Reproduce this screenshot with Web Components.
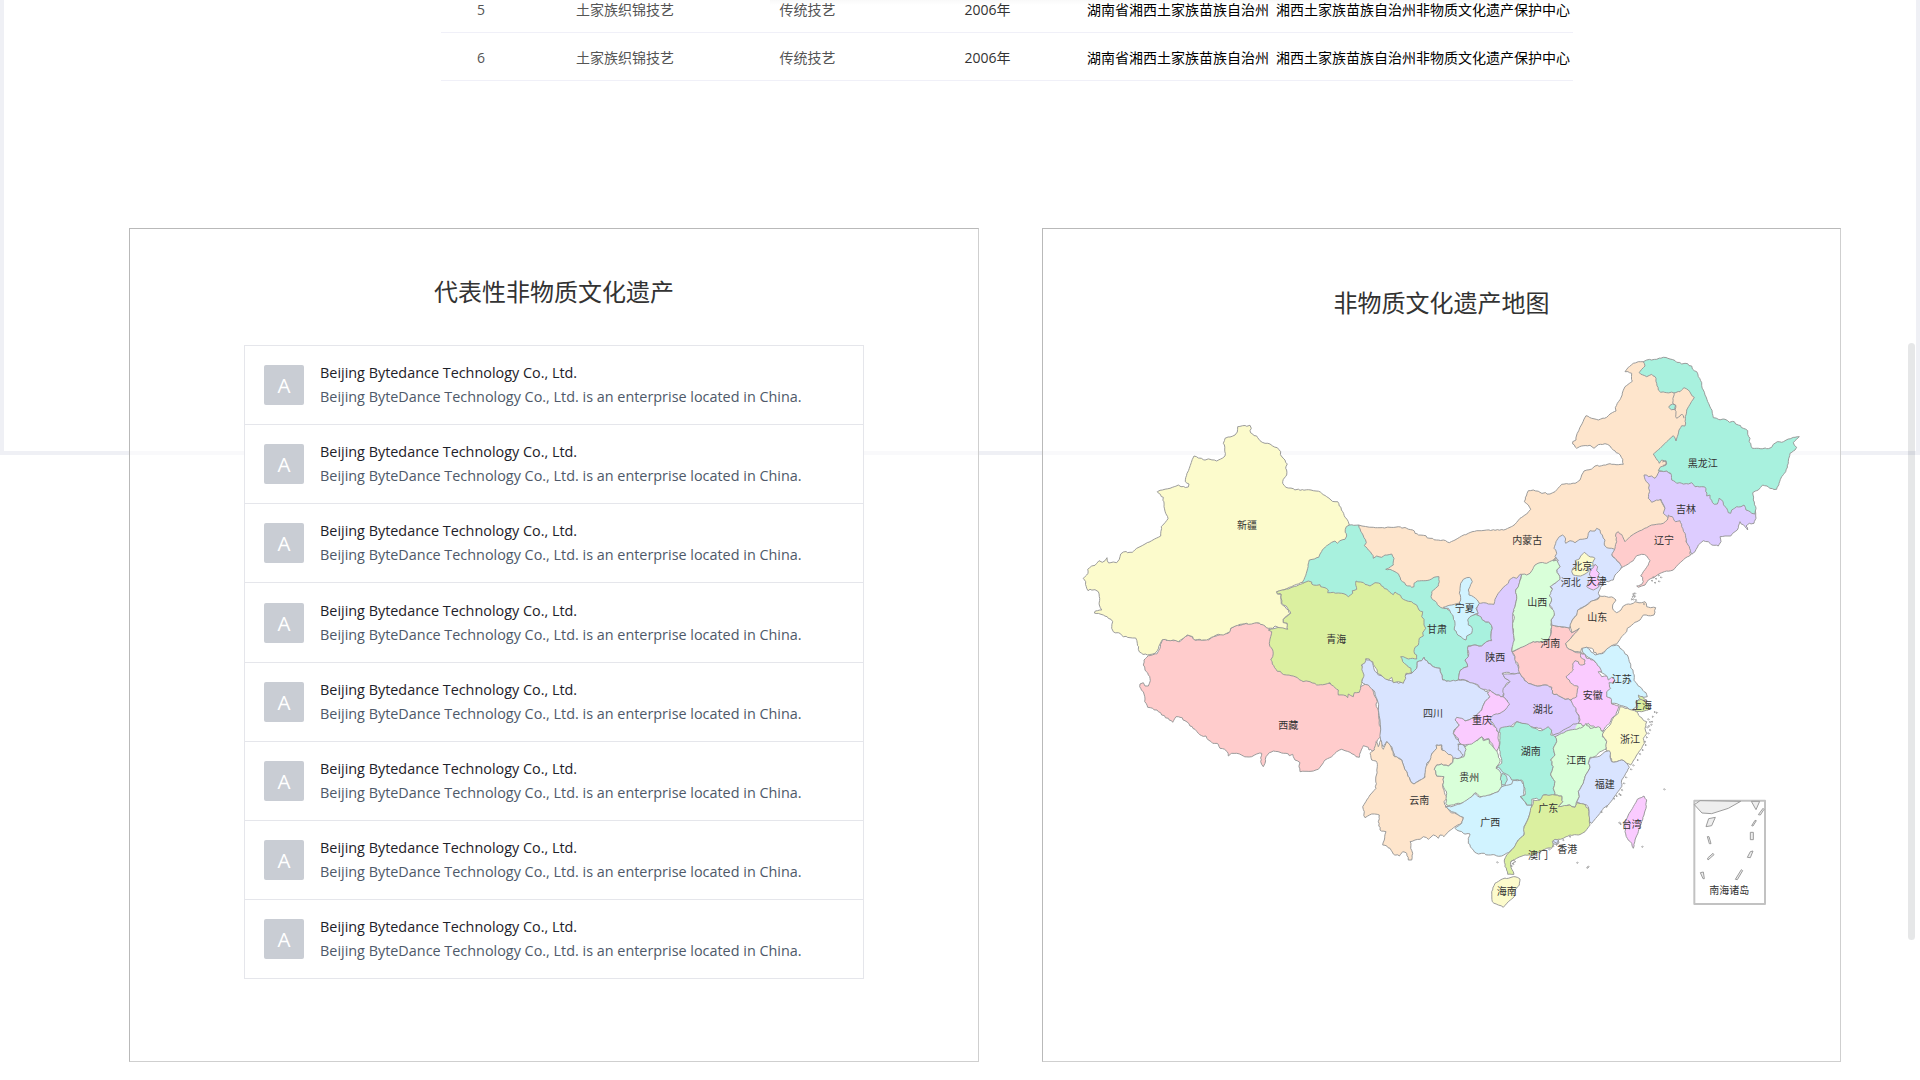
<!DOCTYPE html>
<html lang="zh-CN">
<head>
<meta charset="utf-8">
<title>非物质文化遗产</title>
<style>
html,body{margin:0;height:100%;overflow:hidden;background:#fff;font-family:"Open Sans","Noto Sans CJK SC",sans-serif}
</style>
</head>
<body>
<heritage-page></heritage-page>
<script>
const define = (name, html, setup) => customElements.define(name, class extends HTMLElement {
  constructor() {
    super();
    const t = document.createElement('template');
    t.innerHTML = html;
    this.attachShadow({ mode: 'open' }).append(t.content.cloneNode(true));
  }
  connectedCallback() { if (setup) setup(this, this.shadowRoot); }
});

define('heritage-row', `<style>
:host{display:grid;grid-template-columns:80px 208px 157px 201px 189px 297px;height:48px;box-sizing:border-box;border-bottom:1px solid #f0f0f8;align-items:center;text-align:center;font-size:14px;line-height:18px;color:#555;white-space:nowrap;padding-top:3px}
slot{display:block}
.y{color:#333;padding-left:2px}.b{color:#000;text-align:left}
</style>
<slot name="no"></slot><slot name="name"></slot><slot name="kind"></slot><slot name="year" class="y"></slot><slot name="area" class="b"></slot><slot name="unit" class="b"></slot>`);

define('heritage-card', `<style>
:host{display:flex;flex-direction:column;align-items:center;box-sizing:border-box;height:834px;border:1px solid;border-color:#b9b9b9 #cfcfcf #cfcfcf #b9b9b9;background:rgba(255,255,255,.6)}
h2{margin:0;font-size:24px;line-height:36px;font-weight:400;color:#333}
</style><h2><slot name="title"></slot></h2><slot></slot>`);

define('company-item', `<style>
:host{display:flex;align-items:center;gap:16px;height:79px;flex:none;box-sizing:border-box;padding:0 19px;border-bottom:1px solid #e5e6eb;background:#fff}
:host(:nth-child(4)){height:80px}
:host(:last-child){border-bottom:0;height:78px}
.avatar{width:40px;height:40px;border-radius:2px;background:#c9cdd4;color:#fff;font-size:20.5px;display:flex;align-items:center;justify-content:center}
.text{display:flex;flex-direction:column;font-size:14.4px;line-height:24px;white-space:nowrap}
.title{color:#1d2129}.desc{color:#4e5969}
</style><div class="avatar">A</div><div class="text"><slot name="title" class="title"></slot><slot name="desc" class="desc"></slot></div>`);

define('company-list', `<style>
:host{display:flex;flex-direction:column;width:620px;height:634px;box-sizing:border-box;border:1px solid #e5e6eb;margin-top:35px}
</style><slot></slot>`, el => {
  if (el.children.length) return;
  for (let i = 0; i < 8; i++) el.insertAdjacentHTML('beforeend', `<company-item><span slot="title">Beijing Bytedance Technology Co., Ltd.</span><span slot="desc">Beijing ByteDance Technology Co., Ltd. is an enterprise located in China.</span></company-item>`);
});

/* Outlines use third-pixel units; the leading letter picks the map sheet whose origin they are relative to. */
const SHEETS = { D:[1070,410], E:[1380,340], F:[1340,500], G:[1340,680], H:[1120,560], I:[1640,760] };
const C = { yellow:'#fcfbcc', teal:'#a8f1de', orange:'#fee5cc', red:'#ffcccc', purple:'#ddccff', blue:'#d9e4ff', green:'#d9ffd9', cyan:'#d1f3ff', lime:'#dbf0a0', pink:'#facbff' };
/* Plain patches below the regions, so that no junction of three borders shows a hole. */
const BASE = [
['blue','G 345,158 390,190 395,240 345,240'],
['cyan','G 472,262 540,262 540,330 472,330'],
['green','G 650,168 690,130 745,122 775,150 700,180'],
['purple','G 640,160 680,135 715,128 700,155 650,175']
];
const REGIONS = [
['orange','E -64,555 -20,562 0,563 30,562 55,560 80,565 98,570 105,580 130,586 150,595 170,600 190,600 208,608 225,600 245,588 265,580 290,572 320,570 345,571 370,570 390,562 405,553 420,535 440,522 452,508 445,495 433,485 440,465 445,452 460,450 480,457 510,462 525,455 545,433 565,432 585,430 600,420 605,405 612,393 635,387 645,378 665,377 690,371 715,374 730,373 728,358 715,340 700,330 690,318 675,311 655,314 642,325 630,316 605,318 590,325 578,312 578,305 588,300 590,285 600,262 618,227 635,235 655,240 680,232 690,222 708,213 706,203 712,190 722,175 735,140 757,124 755,100 735,95 745,82 760,70 775,65 790,65 810,75 900,120 960,170 940,220 930,260 910,330 860,410 830,450 870,540 850,570 740,630 700,645 600,620 540,640 500,700 F 560,260 480,340 420,340 320,340 300,345 200,290 90,200 50,120'],
['teal','D 838,345 866,345 875,368 889,398 883,407 895,420 905,432 910,445 F 110,168 125,172 135,165 155,162 162,175 160,195 145,205 137,208 150,208 165,215 178,228 182,240 197,255 215,262 222,260 222,250 232,243 250,242 268,240 282,232 297,230 298,245 295,258 275,275 273,290 280,300 297,318 310,325 325,330 400,345 412,345 425,350 432,362 450,370 457,385 453,405 455,420 440,425 425,438 405,435 385,437 383,460 385,470 375,480 383,500 372,503 360,512 357,525 355,540 343,545 325,543 308,540 303,520 300,505 280,500 265,490 252,472 245,482 232,485 230,505 220,523 215,520 200,505 182,485 180,470 170,400 100,300 D 790,560 750,560 697,517 690,500 700,430 800,380 820,345'],
['red','H 85,287 110,282 120,265 127,238 145,241 160,242 180,245 195,230 205,226 215,230 222,238 240,240 265,240 280,230 300,224 325,220 332,205 345,198 370,193 395,190 410,188 430,193 445,203 470,215 480,320 560,350 660,380 690,395 722,380 735,373 750,377 758,390 765,410 772,425 768,432 775,450 778,480 782,510 782,530 772,540 770,560 765,575 752,568 747,570 745,562 730,557 722,575 718,592 708,590 690,577 675,572 665,568 650,575 635,590 615,600 605,615 595,628 580,633 555,634 540,635 537,620 540,608 525,600 520,590 518,583 508,587 498,580 480,577 460,573 448,578 438,590 435,610 430,620 422,605 425,580 410,582 395,590 370,588 350,580 335,580 325,588 318,572 300,565 295,553 278,550 265,540 258,528 245,527 235,520 225,508 210,498 195,482 180,472 168,470 158,487 145,475 125,465 115,455 98,445 83,442 74,425 73,405 70,395 62,385 60,372 70,368 75,378 85,378 91,362 85,345 75,330 70,315 72,300'],
['yellow','D 503,50 518,47 530,49 540,46 544,55 540,62 548,72 563,83 570,92 585,100 600,102 608,108 622,113 632,125 634,138 645,150 652,162 647,175 650,195 640,208 638,220 648,232 670,236 690,241 715,239 738,243 755,250 770,260 783,270 795,275 803,275 808,288 818,305 825,322 835,335 838,345 829,350 826,358 830,378 825,388 810,392 802,400 795,393 785,397 770,407 757,420 750,432 746,442 733,447 718,450 714,465 709,490 704,503 697,517 680,523 650,536 620,545 623,552 634,553 634,582 645,590 655,600 661,612 650,617 640,628 640,637 650,640 654,657 640,657 625,652 615,648 608,655 595,655 585,648 572,643 560,638 545,642 530,640 510,643 490,651 482,655 480,665 470,670 460,675 445,673 430,680 410,690 390,688 375,690 368,680 352,675 340,685 325,695 310,690 292,691 277,689 270,702 262,722 255,730 232,735 215,730 205,718 202,700 197,684 180,683 160,680 145,668 130,665 125,655 128,635 115,625 100,615 90,612 73,609 76,603 95,600 88,585 88,560 85,545 75,539 60,538 54,542 50,535 47,515 40,505 50,495 54,490 53,478 65,468 75,466 87,452 97,457 105,452 111,443 116,459 130,456 140,458 148,448 152,432 160,426 187,427 200,415 210,410 225,402 245,392 260,384 272,378 274,350 285,338 294,326 287,310 282,290 280,262 262,245 270,241 300,235 325,225 333,230 355,231 357,222 346,215 347,203 358,175 372,138 385,144 400,149 420,148 433,150 440,153 458,144 465,138 464,120 460,100 465,85 480,81 495,75 502,66'],
['blue','F 68,487 75,478 90,480 98,490 103,510 115,525 130,530 145,540 175,550 190,545 195,525 215,520 230,505 232,485 245,482 252,472 265,490 280,500 300,505 303,520 308,540 325,543 355,540 375,540 400,550 430,568 443,575 450,590 435,605 425,630 415,640 400,655 375,663 355,655 345,660 358,675 342,690 340,700 G 345,170 355,180 370,190 355,195 355,210 370,225 358,235 340,235 325,225 310,215 305,195 290,195 290,205 275,222 275,235 260,250 258,275 250,300 240,300 222,312 210,300 200,275 185,240 165,230 155,200 140,185 130,200 122,180 120,120 112,60 100,30 85,15 65,5 F 68,530 62,515'],
['lime','H 470,95 500,87 530,78 555,67 565,63 575,66 575,72 590,76 600,74 602,80 615,83 625,90 623,98 640,97 655,99 665,100 678,104 685,110 698,100 697,92 710,88 708,63 722,66 735,73 750,78 765,68 775,69 790,80 805,92 820,104 825,96 835,103 850,118 865,124 880,130 890,135 897,150 908,155 905,170 912,178 912,195 917,205 908,218 910,228 898,235 895,255 885,262 882,275 890,285 890,297 878,295 865,297 850,290 842,290 848,305 860,315 873,325 875,338 858,340 857,355 850,370 835,365 820,368 815,352 805,360 790,352 775,342 768,325 758,305 748,297 737,296 735,308 724,315 728,335 732,345 725,365 722,385 718,397 703,398 700,410 685,402 683,413 670,405 655,405 655,390 645,383 630,368 615,373 590,375 570,365 545,362 525,350 500,345 485,340 468,328 457,312 452,300 458,290 458,270 448,250 452,230 455,215 445,210 465,205 480,203 503,208 502,190 490,188 490,178 512,160 503,145 485,130 484,103 472,102'],
['orange','G 95,215 103,210 108,185 115,200 122,180 130,208 140,185 150,195 160,225 175,235 185,240 200,275 210,300 222,312 245,298 255,292 258,260 270,240 275,222 290,205 288,195 305,195 305,210 320,218 338,230 338,245 325,258 305,252 290,255 283,268 290,288 312,290 308,315 312,330 320,355 312,365 320,380 330,395 355,405 370,412 365,430 345,440 335,448 325,455 312,470 300,465 295,475 280,465 265,478 250,470 240,478 225,480 210,485 212,505 218,520 215,540 205,540 200,520 188,515 178,528 160,522 150,505 128,495 133,480 138,455 120,450 115,425 118,405 95,402 75,413 68,380 80,360 90,345 108,325 107,300 112,260 108,243 95,240 90,220'],
['purple','F 545,223 540,240 535,260 527,270 530,290 525,320 518,345 520,400 523,420 515,450 525,470 527,490 540,510 540,520 520,520 500,517 487,520 495,535 510,545 500,550 492,565 490,590 470,585 450,570 430,568 410,553 390,548 375,540 355,538 357,525 360,512 372,503 383,500 375,480 385,470 383,440 405,435 425,438 440,425 455,422 453,405 457,385 450,370 432,362 412,345 410,325 415,310 430,308 445,312 462,313 465,298 475,280 490,262 505,250 508,240 520,232 530,235 540,223'],
['cyan','F 380,233 392,235 397,245 390,260 385,270 387,285 400,290 412,300 418,310 408,325 415,340 400,345 390,350 383,360 385,375 397,385 395,400 380,408 378,420 365,412 350,400 343,390 345,370 338,345 325,325 310,322 335,315 357,310 362,300 358,280 362,250 370,238'],
['purple','E 792,405 800,405 805,410 815,408 825,415 832,405 838,393 860,393 900,410 1000,450 1060,480 1120,500 1127,520 1128,535 1122,550 1108,550 1098,558 1103,570 1095,560 1080,545 1072,570 1058,580 1052,588 1035,588 1020,590 1023,605 1015,618 995,615 985,605 970,602 955,615 945,635 935,643 925,630 915,590 890,550 862,530 850,520 855,505 848,490 843,478 830,480 815,487 805,475 808,450 805,430 795,418'],
['teal','E 790,65 800,60 830,58 850,52 870,57 890,67 905,72 915,70 935,78 943,92 950,95 955,110 965,128 970,150 975,165 983,185 992,205 997,220 1000,233 1015,238 1035,238 1048,247 1063,245 1075,255 1090,265 1103,272 1103,283 1110,295 1107,305 1117,325 1135,325 1160,326 1175,322 1180,313 1192,305 1205,307 1225,297 1245,292 1258,290 1245,302 1240,308 1250,322 1245,330 1230,340 1225,370 1217,395 1205,410 1197,430 1190,448 1170,445 1148,435 1135,450 1118,458 1120,480 1127,500 1125,522 1110,515 1098,510 1092,495 1083,500 1070,500 1055,510 1052,520 1045,518 1035,500 1025,480 1017,475 1012,492 1003,493 990,475 990,465 980,468 978,445 965,440 945,440 935,428 925,432 905,430 890,430 875,420 872,400 860,393 845,393 835,392 842,380 858,375 858,365 845,360 838,370 828,355 820,342 840,325 860,305 880,287 888,303 892,290 897,270 905,257 915,258 916,230 920,210 930,193 943,172 925,150 912,143 900,155 880,158 860,158 842,157 835,150 830,130 828,115 815,103 800,110 778,98 785,88 795,78'],
['teal','E 870,196 878,192 887,196 885,208 874,209 866,202'],
['red','E 695,640 705,625 710,605 708,580 715,575 728,590 735,605 750,590 765,580 780,572 800,563 815,555 830,553 850,550 862,540 865,525 880,535 887,545 900,542 905,560 915,580 918,605 928,620 932,645 915,655 895,673 880,690 860,693 845,698 825,710 805,720 795,735 785,738 775,742 770,738 785,733 790,725 788,712 782,708 790,695 805,675 810,662 800,648 785,643 770,647 760,662 745,672 730,680 722,685 718,668 705,655 695,645'],
['blue','F 647,150 642,145 648,125 658,110 668,105 675,112 677,130 690,122 705,128 720,118 742,115 745,100 750,92 765,93 770,85 780,90 787,105 795,120 793,135 800,143 815,145 824,148 815,165 825,175 838,188 845,200 840,210 825,225 820,240 805,245 795,242 782,262 775,280 780,290 765,300 750,305 740,315 720,325 710,345 700,355 692,375 688,385 665,380 650,378 635,375 633,360 643,345 637,325 628,315 635,300 628,285 637,265 630,258 645,250 660,235 655,222 650,210 660,200 650,190 655,180 645,170 650,160'],
['green','F 640,183 650,180 655,190 660,200 650,210 655,222 660,238 645,250 630,260 637,268 628,288 635,300 628,315 637,328 643,345 633,360 635,380 632,405 625,420 605,425 580,425 565,435 545,443 515,455 517,440 523,420 520,400 518,375 523,350 518,340 525,320 530,290 527,270 535,260 543,235 545,223 560,225 570,220 585,195 600,188 620,190 640,180 648,172'],
['red','F 635,375 650,380 665,382 688,385 695,398 705,393 718,385 710,398 700,405 690,418 677,430 680,440 695,450 710,458 725,458 735,463 745,500 720,560 712,590 705,597 690,600 670,595 655,587 637,580 635,562 615,555 600,558 580,555 560,545 545,530 537,515 535,495 527,485 525,470 517,457 535,447 560,435 580,425 605,425 625,422 632,405'],
['orange','F 692,385 690,375 697,360 710,345 713,330 725,325 745,312 755,303 775,297 780,288 800,290 820,293 828,300 818,315 820,330 830,338 843,330 850,318 865,312 880,310 885,305 905,308 915,305 920,320 947,323 942,345 925,347 910,345 900,360 885,367 870,380 862,385 860,395 845,410 830,432 815,437 800,450 785,460 770,465 755,445 740,442 725,445 722,457 705,455 695,450 680,440 677,430 690,418 700,405 710,395 718,385 705,393 695,398'],
['cyan','F 727,445 740,442 750,450 765,465 790,460 800,447 815,437 830,435 840,445 862,465 868,485 880,520 885,545 905,565 918,578 922,590 905,590 895,600 887,605 890,620 875,630 855,620 838,615 815,610 812,595 798,590 798,575 805,560 800,528 770,510 765,485 745,472 730,458'],
['purple','F 510,522 540,520 545,530 560,545 580,555 600,558 615,555 635,562 637,580 655,587 670,595 690,600 705,620 715,645 718,670 700,672 690,680 670,690 655,700 640,705 630,690 615,690 595,685 570,680 545,670 530,665 510,680 490,685 475,700 465,680 455,665 440,650 455,640 480,640 505,615 500,600 490,590 490,565 510,545 495,535 487,520'],
['pink','F 722,460 735,462 740,475 760,480 770,490 778,500 785,515 775,515 785,530 800,528 805,540 815,532 825,540 820,550 807,548 812,565 800,575 800,590 812,595 815,612 838,618 833,630 828,645 815,655 810,668 797,680 790,693 775,688 765,682 752,678 745,670 735,678 715,670 720,660 712,640 708,625 697,610 692,600 710,590 712,570 713,558 697,552 688,540 678,530 690,520 700,510 698,492 705,482 715,485 722,495 735,492 735,480 722,472'],
['green','G 353,193 370,193 378,208 372,230 358,235 340,235 338,248 325,258 305,252 290,255 283,268 290,288 312,290 308,315 320,340 318,355 320,375 335,375 355,370 375,368 395,350 405,338 420,350 440,350 455,342 475,335 485,320 483,290 480,275 468,265 480,245 475,225 470,210 458,200 448,190 445,178 430,182 425,170 412,182 400,180 390,190 375,200 365,190'],
['pink','F 450,570 470,585 490,590 500,600 509,612 495,630 480,640 460,645 450,655 455,670 470,685 475,705 478,735 470,753 460,740 450,725 447,716 432,720 425,710 412,720 395,732 375,735 360,730 355,715 340,700 345,690 358,675 345,660 350,652 365,655 375,663 400,655 415,640 425,630 435,605 450,590 443,580'],
['cyan','G 315,380 340,378 365,370 395,350 405,340 420,352 450,345 475,335 485,320 515,312 520,300 545,303 552,320 552,345 545,355 560,375 575,375 570,400 560,425 552,440 552,465 535,480 525,500 505,518 485,528 465,525 445,525 425,520 410,520 395,505 385,490 385,475 390,462 370,460 345,445 365,430 370,412 355,405 335,395'],
['teal','G 480,145 500,140 520,140 530,125 545,130 565,133 585,145 605,152 625,140 635,150 632,165 645,170 650,185 640,205 645,225 632,240 640,260 632,285 645,305 640,325 645,345 630,348 610,345 605,360 590,355 575,358 575,375 560,375 550,360 540,350 555,345 552,320 545,300 525,300 515,300 510,290 500,283 490,278 480,265 468,262 485,250 482,230 478,200 480,175'],
['teal','G 487,280 497,285 502,300 495,315 484,310 482,292'],
['green','G 645,170 665,160 690,150 710,148 730,140 738,130 750,145 775,140 790,155 787,170 800,185 798,208 780,215 765,230 750,232 745,250 750,262 735,290 730,310 715,335 718,350 708,370 705,382 690,375 670,380 655,380 668,365 665,348 645,345 640,325 645,305 632,285 640,260 632,240 645,225 640,205 650,185'],
['yellow','G 840,80 855,85 875,90 890,95 900,110 920,125 915,145 920,160 910,175 913,190 905,205 890,225 885,235 872,255 860,250 845,240 830,245 815,245 808,220 798,210 800,185 787,165 795,150 810,135 822,110 835,100'],
['blue','G 808,212 815,245 830,245 845,240 860,250 868,262 855,285 845,300 845,320 830,340 820,355 805,375 790,385 780,400 755,430 748,420 745,380 730,372 710,368 718,350 715,335 730,310 735,290 750,262 745,250 750,235 780,228 795,215'],
['lime','G 580,360 600,360 610,345 645,345 665,348 668,365 655,380 690,375 705,382 712,368 730,372 745,385 748,425 750,435 735,455 715,465 690,465 670,475 655,478 640,490 635,505 620,505 600,515 580,525 555,525 530,535 512,545 512,560 520,575 522,583 503,583 495,560 493,540 500,525 520,505 535,480 552,465 553,440 565,415 572,385 580,370'],
['yellow','G 487,597 505,595 525,590 540,597 538,615 525,630 523,650 505,665 490,682 475,675 457,665 455,635 465,610'],
['pink','G 912,348 920,360 918,385 912,405 905,425 895,455 885,480 880,505 875,490 862,475 855,455 855,430 865,405 880,380 892,358'],
['lime','F 890,603 903,598 918,605 930,615 925,630 905,635 885,632 893,620'],
['lime','F 895,585 908,590 920,600 908,600 897,594'],
['yellow','F 733,157 745,167 765,175 758,188 760,198 745,200 745,215 735,222 722,228 700,225 695,215 698,205 710,195 705,182 718,177 722,168'],
['pink','F 765,193 773,200 770,212 778,220 772,235 782,245 775,262 760,270 740,260 745,245 755,235 748,225 750,208 758,205'],
['blue','G 637,484 645,478 655,480 657,489 648,493 640,492']
];
const LINES = ['E 882,158 878,190 887,196 885,210 890,235 900,228 905,222 912,235','E 847,366 858,362 860,372 848,376','G 512,545 520,540 527,545 515,552','G 640,484 650,490 655,482'];
const ISLETS = 'E 820,712 828,716 837,724 825,728 843,712 816,722 836,706 765,760 758,770 755,778 762,766 F 880,282 884,290 880,298 888,300 912,312 G 925,118 930,126 934,134 927,138 936,125 944,96 950,98 938,110 922,142 930,150 925,160 920,172 915,185 917,195 908,210 900,222 893,240 880,256 873,268 858,292 852,310 846,330 838,342 830,348 842,345 822,356 800,380 785,396 973,328 838,428 842,432 907,500 712,548 742,563 745,560 472,547 600,518 612,510 628,508 640,498 650,494 670,480 690,470 520,552 515,558'.split(' ');
const LABELS = '新疆D531,347 青海D799,688 西藏H505,495 云南G238,362 甘肃F291,388 宁夏F374,324 内蒙古F562,122 陕西F466,473 山西F592,306 河北F692,248 北京F727,198 天津F770,245 山东F772,353 河南F631,431 安徽F758,585 江苏F845,537 上海F906,615 浙江G870,179 湖北F608,627 四川F279,641 重庆F426,662 湖南G572,215 江西G709,240 贵州G388,291 福建G794,314 广东G625,386 广西G451,428 台湾G875,432 香港G682,507 澳门G594,527 海南G500,635 黑龙江E968,371 吉林E918,507 辽宁E852,602 南海诸岛I268,392';

const MX = 1043, MY = 340;
const at = (s, x, y) => [SHEETS[s][0] - MX + x / 3, SHEETS[s][1] - MY + y / 3];
function points(src) {
  let s = 'D'; const out = [];
  for (const t of src.split(' ')) {
    if (SHEETS[t]) s = t; else { const [x, y] = t.split(',').map(Number); out.push(at(s, x, y)); }
  }
  return out;
}
/* Breaks long segments with a small offset that depends only on the segment's midpoint, so neighbours share it. */
function rough(p, closed) {
  const out = [];
  p.forEach((a, i) => {
    out.push(a);
    const b = p[(i + 1) % p.length];
    if (!closed && i === p.length - 1) return;
    const dx = b[0] - a[0], dy = b[1] - a[1], l = Math.hypot(dx, dy);
    if (l < 4) return;
    const n = Math.min(4, Math.round(l / 2.3));
    for (let k = 1; k < n; k++) {
      const mx = a[0] + dx * k / n, my = a[1] + dy * k / n;
      const h = Math.sin(mx * 12.99 + my * 78.23) * 43758.5, o = ((h - Math.floor(h)) - .5) * 1.3;
      out.push([mx + o, my - o]);
    }
  });
  return 'M' + out.map(q => q[0].toFixed(1) + ' ' + q[1].toFixed(1)).join('L') + (closed ? 'Z' : '');
}
define('china-map', `<style>
:host{display:block;width:797px;height:600px}
svg{display:block}
path{stroke:#979797;stroke-width:.95;stroke-linejoin:round}
.base{stroke:none}
.open{fill:none}
text{font:10px "Noto Sans CJK SC",sans-serif;fill:#333;text-anchor:middle}
</style><svg width="797" height="600" viewBox="0 0 797 600"></svg>`, (el, root) => {
  let s = '';
  for (const [c, d] of BASE) s += `<path class="base" fill="${C[c]}" d="${rough(points(d), true)}"/>`;
  for (const [c, d] of REGIONS) s += `<path fill="${C[c]}" d="${rough(points(d), true)}"/>`;
  for (const d of LINES) s += `<path class="open" d="${rough(points(d), false)}"/>`;
  for (const [x, y] of points(ISLETS.join(' '))) s += `<path class="open" d="M${x - .7} ${y}l.8-.6.7.7-.6.6z"/>`;
  const box = (t, extra) => `<path ${extra} d="M${points('I ' + t).map(p => p.join(' ')).join('L')}Z"/>`;
  s += box('163,122 375,122 375,432 163,432', 'fill="#fff" style="stroke:#c2c2c2;stroke-width:2"');
  s += box('163,134 180,122 302,124 265,145 215,161 186,159', 'fill="#eee"');
  s += box('334,124 359,124 348,149', 'fill="#eee"');
  for (const t of ['206,176 226,172 215,197 198,200','202,230 207,230 213,251 208,251','203,294 219,280 222,284 204,300','181,338 190,336 193,356 189,356','286,358 304,329 308,332 292,359','322,292 331,275 339,273 331,293','331,217 340,217 340,239 331,239','335,197 345,181 349,182 339,198','355,164 369,145 372,148 361,165']) s += box(t, 'fill="#eee"');
  for (const l of LABELS.split(' ')) {
    const [, name, sh, x, y] = l.match(/^(\D+)([D-I])(\d+),(\d+)$/);
    const p = at(sh, +x, +y);
    s += `<text x="${p[0].toFixed(1)}" y="${(p[1] + 3.5).toFixed(1)}">${name}</text>`;
  }
  root.querySelector('svg').innerHTML = s;
});

define('heritage-page', `<style>
:host{display:block;position:relative;width:1920px;height:1080px;overflow:hidden;background:#fff}
.frame{position:absolute;left:0;top:-10px;width:1920px;height:465px;box-sizing:border-box;border:4px solid #eff0f5;border-top:0}
.shade{position:absolute;left:770px;top:0;width:750px;height:5px;background:linear-gradient(#f9f9f9,#fff)}
.bar{position:absolute;right:5px;top:343px;width:7px;height:597px;border-radius:4px;background:rgba(30,35,45,.11)}
main{position:relative;display:flex;flex-direction:column}
.table{display:flex;flex-direction:column;width:1132px;margin:-15px 0 147px 441px}
.cards{display:flex;gap:63px;padding-left:129px}
.left{width:850px;padding-top:45px}
.right{width:799px;padding-top:56px}
china-map{margin-top:19px}
</style>
<div class="frame"></div><div class="shade"></div>
<main>
<section class="table">
${[5,6].map(n => `<heritage-row><span slot="no">${n}</span><span slot="name">土家族织锦技艺</span><span slot="kind">传统技艺</span><span slot="year">2006年</span><span slot="area">湖南省湘西土家族苗族自治州</span><span slot="unit">湘西土家族苗族自治州非物质文化遗产保护中心</span></heritage-row>`).join('')}
</section>
<section class="cards">
<heritage-card class="left"><span slot="title">代表性非物质文化遗产</span><company-list></company-list></heritage-card>
<heritage-card class="right"><span slot="title">非物质文化遗产地图</span><china-map></china-map></heritage-card>
</section>
</main>
<div class="bar"></div>`);
</script>
</body>
</html>
